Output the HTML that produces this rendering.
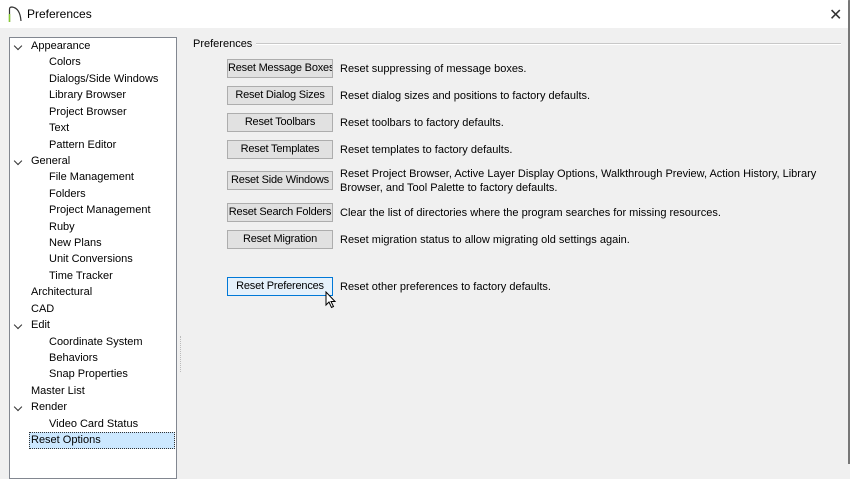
<!DOCTYPE html>
<html><head><style>
body{margin:0;width:850px;height:463px;overflow:hidden;background:#f0f0f0;font-family:"Liberation Sans",sans-serif;font-size:11px;color:#000;position:relative}
.win{position:absolute;left:0;top:0;width:848px;height:463px;border-right:2px solid #777;border-top:1px solid #888}
.title{position:absolute;left:0;top:0;width:848px;height:28px;background:#fff}
.title span{position:absolute;left:27px;top:7px;font-size:12px}
.close{position:absolute;left:829px;top:5px;font-size:16px;color:#333}
.tree{position:absolute;left:9px;top:37px;width:166px;height:440px;background:#fff;border:1px solid #828790}
.it{position:absolute;white-space:nowrap}
.chev{position:absolute;width:5px;height:5px;border-right:1.3px solid #333;border-bottom:1.3px solid #333;transform:rotate(45deg)}
.sel{position:absolute;left:19px;top:394px;width:144px;height:15px;background:#cce8ff;border:1px dotted #333}
.grp{position:absolute;left:193px;top:38px}
.line{position:absolute;left:256px;top:43px;width:585px;height:1px;background:#c8c8c8;border-bottom:1px solid #fff}
.btn{position:absolute;left:227px;width:104px;height:17px;background:#e1e1e1;border:1px solid #adadad;text-align:center;line-height:17px;white-space:nowrap;letter-spacing:-0.2px;overflow:hidden}
.d{position:absolute;left:340px;white-space:nowrap;line-height:14px}
</style></head><body>
<div class="win"></div>
<div class="title"><svg style="position:absolute;left:8px;top:6px" width="14" height="16"><path d="M1.5 16V3 Q1.5 1 4 1 Q12 2 13 15" fill="none" stroke="#333" stroke-width="1.2"/><path d="M1.5 16V8" stroke="#8c3" stroke-width="1.5"/></svg><span>Preferences</span><div class="close">✕</div></div>
<div class="tree">
<div class="sel"></div>
</div>
<div id="items"></div>
<div class="grp">Preferences</div><div class="line"></div>
<div class="btn" style="top:59px">Reset Message Boxes</div><div class="d" style="top:62px">Reset suppressing of message boxes.</div>
<div class="btn" style="top:86px">Reset Dialog Sizes</div><div class="d" style="top:89px">Reset dialog sizes and positions to factory defaults.</div>
<div class="btn" style="top:113px">Reset Toolbars</div><div class="d" style="top:116px">Reset toolbars to factory defaults.</div>
<div class="btn" style="top:140px">Reset Templates</div><div class="d" style="top:143px">Reset templates to factory defaults.</div>
<div class="btn" style="top:171px">Reset Side Windows</div><div class="d" style="top:167px">Reset Project Browser, Active Layer Display Options, Walkthrough Preview, Action History, Library<br>Browser, and Tool Palette to factory defaults.</div>
<div class="btn" style="top:203px">Reset Search Folders</div><div class="d" style="top:206px">Clear the list of directories where the program searches for missing resources.</div>
<div class="btn" style="top:230px">Reset Migration</div><div class="d" style="top:233px">Reset migration status to allow migrating old settings again.</div>
<div class="btn" style="top:277px;background:#e5f1fb;border-color:#0078d7">Reset Preferences</div><div class="d" style="top:280px">Reset other preferences to factory defaults.</div>
<svg style="position:absolute;left:325px;top:291px" width="12" height="18"><path d="M1 1V14L4 11L6.5 16.5L8.5 15.5L6 10.5H10Z" fill="#fff" stroke="#000" stroke-width="1"/></svg>
<div style="position:absolute;left:180px;top:336px;width:2px;height:36px;border-left:1px dotted #bbb"></div>
<script>
var t=[["Appearance",0,1],["Colors",1],["Dialogs/Side Windows",1],["Library Browser",1],["Project Browser",1],["Text",1],["Pattern Editor",1],["General",0,1],["File Management",1],["Folders",1],["Project Management",1],["Ruby",1],["New Plans",1],["Unit Conversions",1],["Time Tracker",1],["Architectural",0],["CAD",0],["Edit",0,1],["Coordinate System",1],["Behaviors",1],["Snap Properties",1],["Master List",0],["Render",0,1],["Video Card Status",1],["Reset Options",0]];
var h="";t.forEach(function(e,i){var y=40+i*16.42;h+='<div class="it" style="left:'+(e[1]?49:31)+'px;top:'+y+'px">'+e[0]+'</div>';if(e[2])h+='<div class="chev" style="left:15px;top:'+(y+3)+'px"></div>';});
document.getElementById("items").innerHTML=h;
</script>
</body></html>
